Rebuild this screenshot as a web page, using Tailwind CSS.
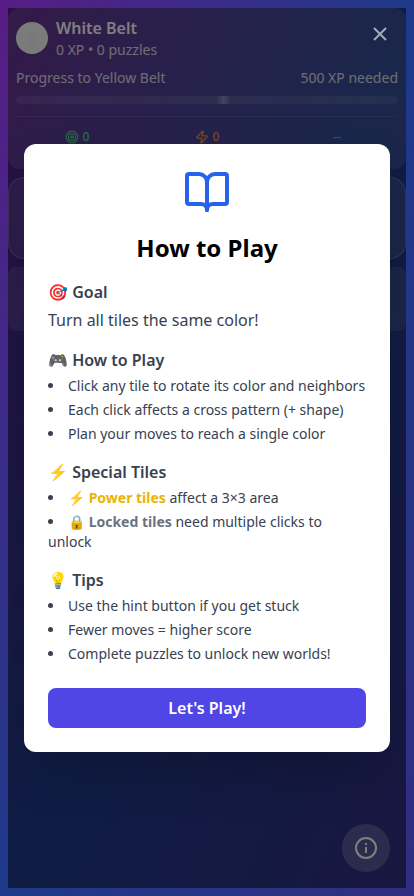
<!DOCTYPE html>
<html lang="en">
<head>
<meta charset="utf-8">
<meta name="viewport" content="width=device-width, initial-scale=1">
<title>How to Play</title>
<script src="https://cdn.jsdelivr.net/npm/@tailwindcss/browser@4"></script>
</head>
<body class="h-[896px] overflow-hidden p-2 font-['Noto_Sans',sans-serif] bg-[linear-gradient(to_bottom_right,#581c87,#1e3a8a,#312e81)]">
<div class="relative h-[880px] overflow-hidden">
  <main class="flex flex-col gap-2 text-white">
    <section class="h-[161px] rounded-xl bg-white/10 p-2">
      <div class="flex items-center gap-2">
        <div class="size-8 rounded-full bg-[#f6f6f6] flex items-center justify-center">
          <svg class="size-4 text-[#efefef]" viewBox="0 0 24 24" fill="none" stroke="currentColor" stroke-width="2"><circle cx="12" cy="8" r="5"/><path d="M5 20h14M7 16l5 3 5-3"/></svg>
        </div>
        <div>
          <div class="font-semibold leading-6">White Belt</div>
          <div class="text-sm text-white/80">0 XP • 0 puzzles</div>
        </div>
      </div>
      <div class="mt-2 flex justify-between text-sm text-white/80"><span>Progress to Yellow Belt</span><span>500 XP needed</span></div>
      <div class="mt-2 h-2 rounded-full bg-white/10 pl-[200px]"><div class="h-2 w-[15px] bg-linear-to-r from-transparent via-white/30 to-transparent"></div></div>
      <div class="mt-3 grid grid-cols-3 gap-2 border-t border-white/10 pt-3 text-xs font-medium">
        <div class="flex items-center justify-center gap-1 text-[#4ade80]">
          <svg class="size-3.5" viewBox="0 0 24 24" fill="none" stroke="currentColor" stroke-width="2"><circle cx="12" cy="12" r="10"/><circle cx="12" cy="12" r="6"/><circle cx="12" cy="12" r="2"/></svg>0
        </div>
        <div class="flex items-center justify-center gap-1 text-[#fb923c]">
          <svg class="size-3.5" viewBox="0 0 24 24" fill="none" stroke="currentColor" stroke-width="2" stroke-linecap="round" stroke-linejoin="round"><path d="M4 14a1 1 0 0 1-.78-1.63l9.9-10.2a.5.5 0 0 1 .86.46l-1.92 6.02A1 1 0 0 0 13 10h7a1 1 0 0 1 .78 1.63l-9.9 10.2a.5.5 0 0 1-.86-.46l1.92-6.02A1 1 0 0 0 11 14z"/></svg>0
        </div>
        <div class="text-center text-[#60a5fa]">--</div>
      </div>
    </section>
    <section class="h-[82px] rounded-2xl border border-white/20 bg-white/10"></section>
    <section class="h-16 rounded-lg bg-white/10"></section>
  </main>
  <button class="absolute right-4 bottom-4 flex size-12 items-center justify-center rounded-full bg-white/20 text-white">
    <svg class="size-6" viewBox="0 0 24 24" fill="none" stroke="currentColor" stroke-width="2"><circle cx="12" cy="12" r="10"/><path d="M12 17v-6M12 9V7"/></svg>
  </button>

  <div class="absolute inset-0 flex items-center justify-center bg-black/50 p-4">
    <button class="absolute top-3.5 right-3.5 text-[#a3aab8]">
      <svg class="size-6" viewBox="0 0 24 24" fill="none" stroke="currentColor" stroke-width="2" stroke-linejoin="round"><path d="M18 6 6 18M6 6l12 12"/></svg>
    </button>
    <div class="w-full rounded-xl bg-white p-6 shadow-2xl">
      <svg class="mx-auto mb-4 size-12 text-[#2563eb]" viewBox="0 0 24 24" fill="none" stroke="currentColor" stroke-width="2" stroke-linecap="round" stroke-linejoin="round"><path d="M12 7v14"/><path d="M3 18a1 1 0 0 1-1-1V4a1 1 0 0 1 1-1h5a4 4 0 0 1 4 4 4 4 0 0 1 4-4h5a1 1 0 0 1 1 1v13a1 1 0 0 1-1 1h-6a3 3 0 0 0-3 3 3 3 0 0 0-3-3z"/></svg>
      <h2 class="mb-4 text-center text-2xl font-bold text-black">How to Play</h2>
      <div class="mb-6 space-y-4 text-[#374151]">
        <div>
          <h3 class="mb-1 font-semibold">🎯 Goal</h3>
          <p>Turn all tiles the same color!</p>
        </div>
        <div>
          <h3 class="mb-1 font-semibold">🎮 How to Play</h3>
          <ul class="list-inside list-disc space-y-1 text-sm">
            <li>Click any tile to rotate its color and neighbors</li>
            <li>Each click affects a cross pattern (+ shape)</li>
            <li>Plan your moves to reach a single color</li>
          </ul>
        </div>
        <div>
          <h3 class="mb-1 font-semibold">⚡ Special Tiles</h3>
          <ul class="list-inside list-disc space-y-1 text-sm">
            <li><span class="font-bold text-[#eab308]">⚡ Power tiles</span> affect a 3×3 area</li>
            <li><span class="font-bold text-[#6b7280]">🔒 Locked tiles</span> need multiple clicks to unlock</li>
          </ul>
        </div>
        <div>
          <h3 class="mb-1 font-semibold">💡 Tips</h3>
          <ul class="list-inside list-disc space-y-1 text-sm">
            <li>Use the hint button if you get stuck</li>
            <li>Fewer moves = higher score</li>
            <li>Complete puzzles to unlock new worlds!</li>
          </ul>
        </div>
      </div>
      <button class="block h-10 w-full rounded-lg bg-[#4f46e5] font-semibold text-white">Let's Play!</button>
    </div>
  </div>
</div>
</body>
</html>
